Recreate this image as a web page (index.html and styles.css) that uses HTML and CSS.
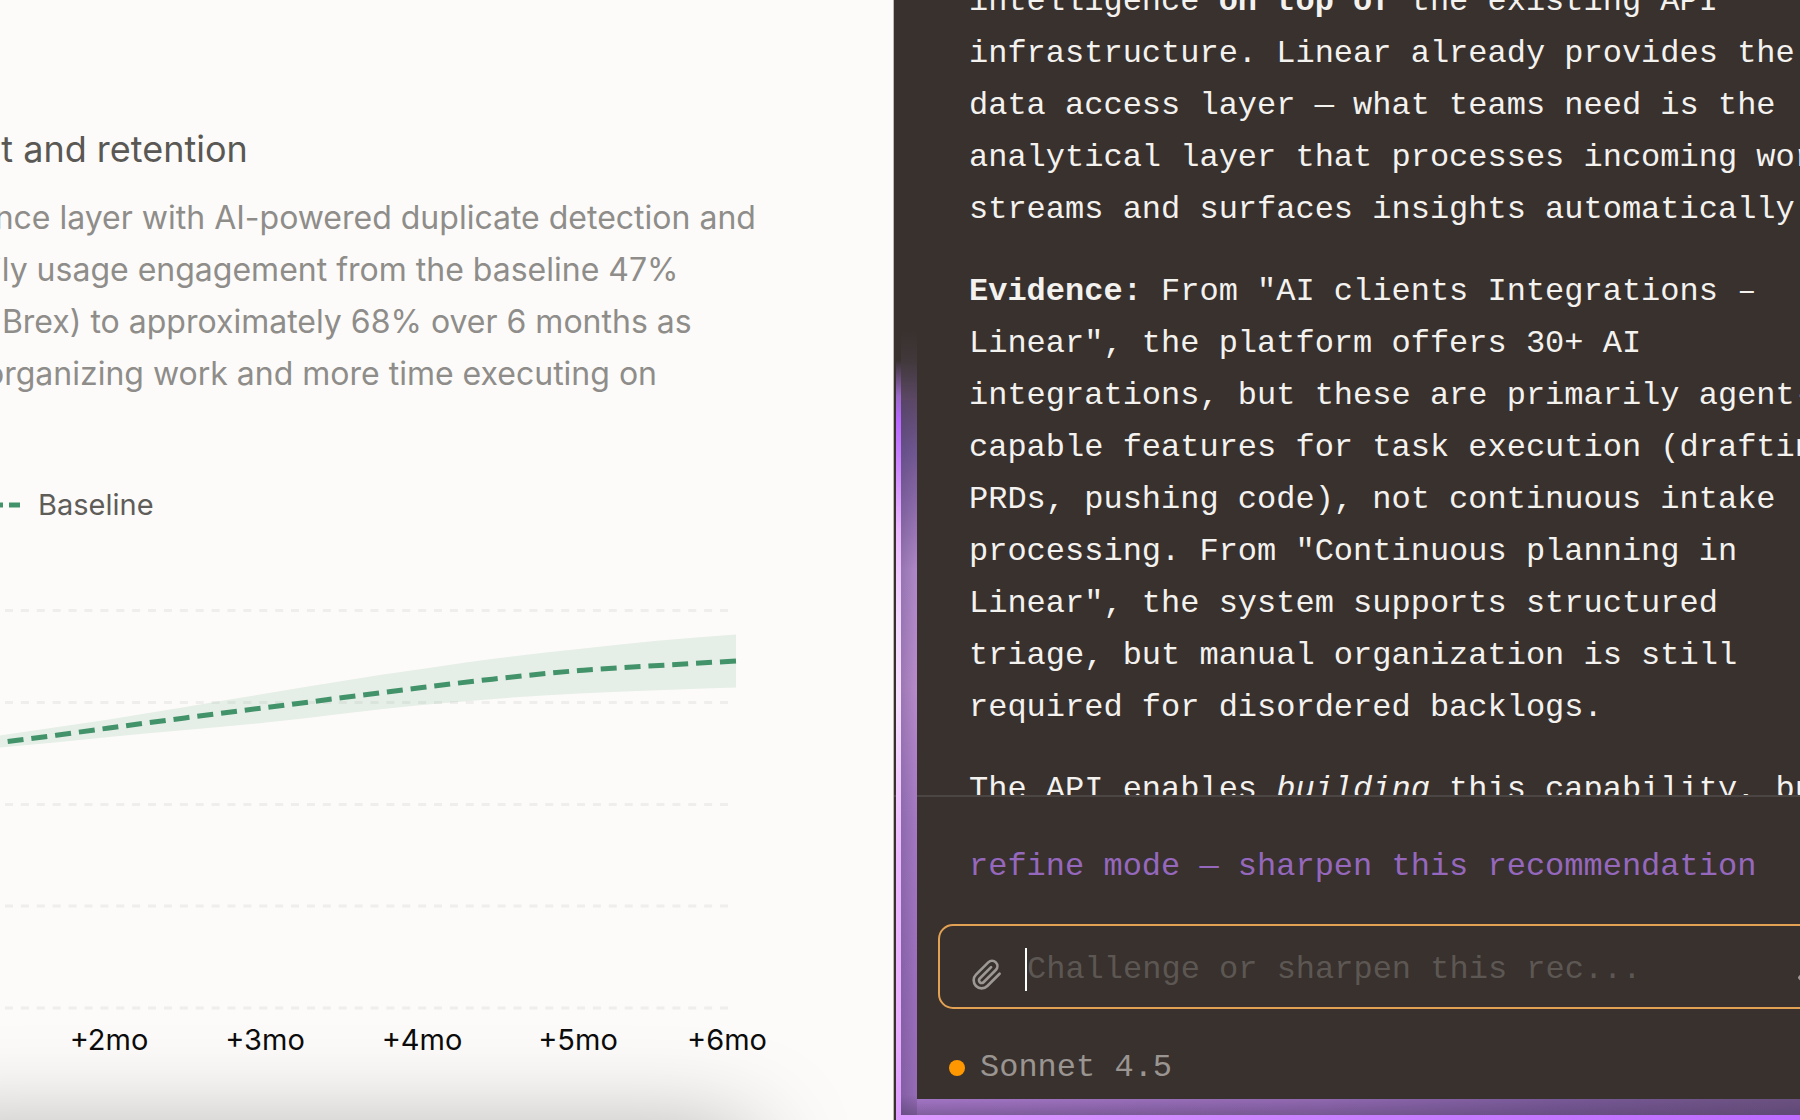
FILE: index.html
```
<!DOCTYPE html>
<html lang="en">
<head>
<meta charset="utf-8">
<title>Recommendation forecast</title>
<link rel="stylesheet" href="styles.css">
</head>
<body>
<div class="workspace">
  <main class="report">
    <h2 class="report-title">nt and retention</h2>
    <p class="report-text">ence layer with AI-powered duplicate detection and<br>aily usage engagement from the baseline 47%<br>s Brex) to approximately 68% over 6 months as<br>&nbsp;organizing work and more time executing on</p>
    <div class="legend">
      <svg class="legend-mark" width="20" height="6" viewBox="0 0 20 6" aria-hidden="true"><path d="M0 3H3M9 3H20"/></svg>
      <span>Baseline</span>
    </div>
    <svg class="chart" role="img" aria-label="Forecast of daily usage over six months">
      <g class="grid">
        <path d="M5 87.5H729"/>
        <path d="M5 179.5H729"/>
        <path d="M5 281.5H729"/>
        <path d="M5 383H729"/>
        <path d="M5 485H729"/>
      </g>
      <path class="band" d="M0 212.5C36 207 73 202 109 196.500C161 188 214 179 266 170.500C318 162 370 153 422 146C474 138 527 131 579 126C631 120 683 115 736 111.500V164.500C683 166 631 168 579 170.500C527 173 474 177 422 182C370 187 318 194 266 199.500C214 205 161 209 109 214C73 218 36 221 0 224.500Z"/>
      <path class="line" d="M736 138C683 141 631 144 579 147.500C527 152 474 158 422 164.500C370 171 318 178 266 184.500C214 191 161 198 109 205C73 210 36 215 0 219.500"/>
      <g class="axis">
        <text x="109" y="527">+2mo</text>
        <text x="265" y="527">+3mo</text>
        <text x="422" y="527">+4mo</text>
        <text x="578" y="527">+5mo</text>
        <text x="727" y="527">+6mo</text>
      </g>
    </svg>
    <div class="sheet-shadow"></div>
  </main>

  <aside class="chat">
    <div class="thread">
      <p>intelligence <strong>on top of</strong> the existing API<br>infrastructure. Linear already provides the<br>data access layer — what teams need is the<br>analytical layer that processes incoming work<br>streams and surfaces insights automatically.</p>
      <p><strong>Evidence:</strong> From "AI clients Integrations –<br>Linear", the platform offers 30+ AI<br>integrations, but these are primarily agent-<br>capable features for task execution (drafting<br>PRDs, pushing code), not continuous intake<br>processing. From "Continuous planning in<br>Linear", the system supports structured<br>triage, but manual organization is still<br>required for disordered backlogs.</p>
      <p>The API enables <em>building</em> this capability, but</p>
    </div>
    <form class="composer">
      <label class="mode" for="message">refine mode — sharpen this recommendation</label>
      <div class="field">
        <button class="icon-button" type="button" aria-label="Attach a file">
          <svg width="32" height="32" viewBox="0 0 24 24" aria-hidden="true"><path d="M21.440 11.050l-9.190 9.190a6 6 0 0 1-8.490-8.490l9.190-9.190a4 4 0 0 1 5.660 5.660l-9.200 9.190a2 2 0 0 1-2.830-2.830l8.490-8.480"/></svg>
        </button>
        <span class="caret"></span>
        <input id="message" class="message" type="text" placeholder="Challenge or sharpen this rec...">
        <button class="icon-button" type="submit" aria-label="Send">
          <svg width="32" height="32" viewBox="0 0 24 24" aria-hidden="true"><path d="M6 20l-5-6 5-6M1 14h20V4"/></svg>
        </button>
      </div>
      <div class="model"><span class="model-dot"></span>Sonnet 4.5</div>
    </form>
    <div class="glow" aria-hidden="true">
      <div class="glow-side"></div>
      <div class="glow-base"></div>
      <div class="edge-side"></div>
      <div class="edge-base"></div>
    </div>
  </aside>
</div>
</body>
</html>
```
FILE: styles.css
```
* {
  box-sizing: border-box;
}

body {
  margin: 0;
  background: #fcfbf9;
}

.workspace {
  display: grid;
  grid-template-columns: 894fr 906fr;
  height: 100vh;
  overflow: hidden;
}

/* Report */

.report {
  position: relative;
  display: flex;
  flex-direction: column;
  min-width: 0;
  padding-top: 127px;
  overflow: hidden;
  border-right: 1px solid #bfb9b6;
  font-family: Inter, "Liberation Sans", sans-serif;
}

.report-title,
.report-text {
  font-weight: 400;
  white-space: nowrap;
}

.report-title {
  margin: 0 0 0 -20px;
  font-size: 36px;
  line-height: 44px;
  color: #5a5854;
}

.report-text {
  margin: 21px 0 0 -24px;
  font-size: 32px;
  line-height: 52px;
  color: #8f8d8a;
}

.legend {
  display: flex;
  align-items: center;
  gap: 18px;
  margin-top: 87px;
  font-size: 29px;
  line-height: 36px;
  color: #5f5d5a;
}

.legend-mark {
  stroke: #43936a;
  stroke-width: 5;
}

.chart {
  flex: none;
  width: 100%;
  height: 560px;
}

.grid path {
  stroke: #efeeec;
  stroke-width: 3;
  stroke-dasharray: 8 7.890;
}

.band {
  fill: #43936a;
  fill-opacity: 0.12;
}

.line {
  fill: none;
  stroke: #43936a;
  stroke-width: 5;
  stroke-dasharray: 16 7.900;
}

.axis {
  fill: #0c0c0c;
  font-size: 29px;
  text-anchor: middle;
}

/* Shadow cast upwards by the sheet docked under the report */
.sheet-shadow {
  position: absolute;
  top: 100%;
  left: -100px;
  right: 140px;
  height: 80px;
  margin-top: 16px;
  border-radius: 24px;
  box-shadow: 0 0 100px rgba(0, 0, 0, 0.36);
}

/* Chat */

.chat {
  position: relative;
  display: flex;
  flex-direction: column;
  min-width: 0;
  overflow: hidden;
  background: #38312e;
  color: #f4f2ef;
  font-family: "Liberation Mono", "Courier New", monospace;
  font-size: 32px;
}

.thread {
  display: flex;
  flex: 1;
  flex-direction: column;
  gap: 30px;
  min-height: 0;
  padding-left: 75px;
  overflow: hidden;
  line-height: 52px;
  white-space: nowrap;
}

.thread p {
  margin: 0;
}

.thread p:first-child {
  margin-top: -24px;
}

.composer {
  display: flex;
  flex: none;
  flex-direction: column;
  padding: 50px 0 32px 44px;
  border-top: 2px solid #4b4643;
  line-height: 40px;
}

.mode {
  padding-left: 31px;
  color: #9568bd;
  white-space: nowrap;
}

.field {
  display: flex;
  align-items: flex-end;
  margin: 37px -64px 39px 0;
  padding: 22px 32px 16px 31px;
  border: 2px solid #e3a153;
  border-radius: 15px;
}

.icon-button {
  display: flex;
  flex: none;
  padding: 0;
  border: 0;
  background: none;
}

.icon-button svg {
  fill: none;
  stroke: #9d9894;
  stroke-width: 2;
  stroke-linecap: round;
  stroke-linejoin: round;
}

.caret {
  width: 2px;
  height: 43px;
  margin-left: 22px;
  background: #fff;
}

.message {
  flex: 1;
  min-width: 0;
  height: 43px;
  padding: 0;
  border: 0;
  outline: 0;
  background: none;
  color: #f4f2ef;
  font: inherit;
}

.message::placeholder {
  color: #5d5753;
  opacity: 1;
}

.model {
  display: flex;
  align-items: center;
  gap: 15px;
  padding-left: 11px;
  color: #9a9591;
}

.model-dot {
  width: 16px;
  height: 16px;
  border-radius: 50%;
  background: #ff9800;
}

/* Refine-mode glow around the chat */

.glow {
  position: absolute;
  inset: 0 0 0 2px;
  pointer-events: none;
}

.glow div {
  position: absolute;
}

.glow-side {
  top: 330px;
  bottom: 5px;
  left: 5px;
  width: 16px;
  background:
    linear-gradient(to top, rgba(80, 62, 104, 0.5), transparent 20px),
    linear-gradient(to right, rgba(70, 60, 110, 0.25), transparent) 0 70px no-repeat,
    linear-gradient(rgba(56, 49, 46, 0), #40383a 30px, #5c4765 70px, #6f5690 120px, #8a68a8 170px, #b088c8 240px, #b88bcb 360px, #a579c3 490px, #9a6dbb 670px, #966bb6 770px);
}

.glow-base {
  right: 0;
  bottom: 5px;
  left: 21px;
  height: 16px;
  background:
    linear-gradient(to top, rgba(80, 62, 104, 0.4), transparent),
    linear-gradient(to right, #a274c4, #9068b0 400px, #775896 650px, #6a507f);
}

.edge-side {
  top: 360px;
  bottom: 0;
  left: 0;
  width: 5px;
  background: linear-gradient(rgba(184, 104, 255, 0), #9a6ac8 36px, #b868ff 60px, #d08aff 110px, #ecb8ff 170px, #f3d9ff 260px, #f6e0ff 340px, #ecb8ff 500px, #eab0ff 660px, #dd9cff);
}

.edge-base {
  right: 0;
  bottom: 0;
  left: 5px;
  height: 5px;
  background: linear-gradient(to right, #dd9cff, #c880ff 450px, #bd6cff);
}
```
